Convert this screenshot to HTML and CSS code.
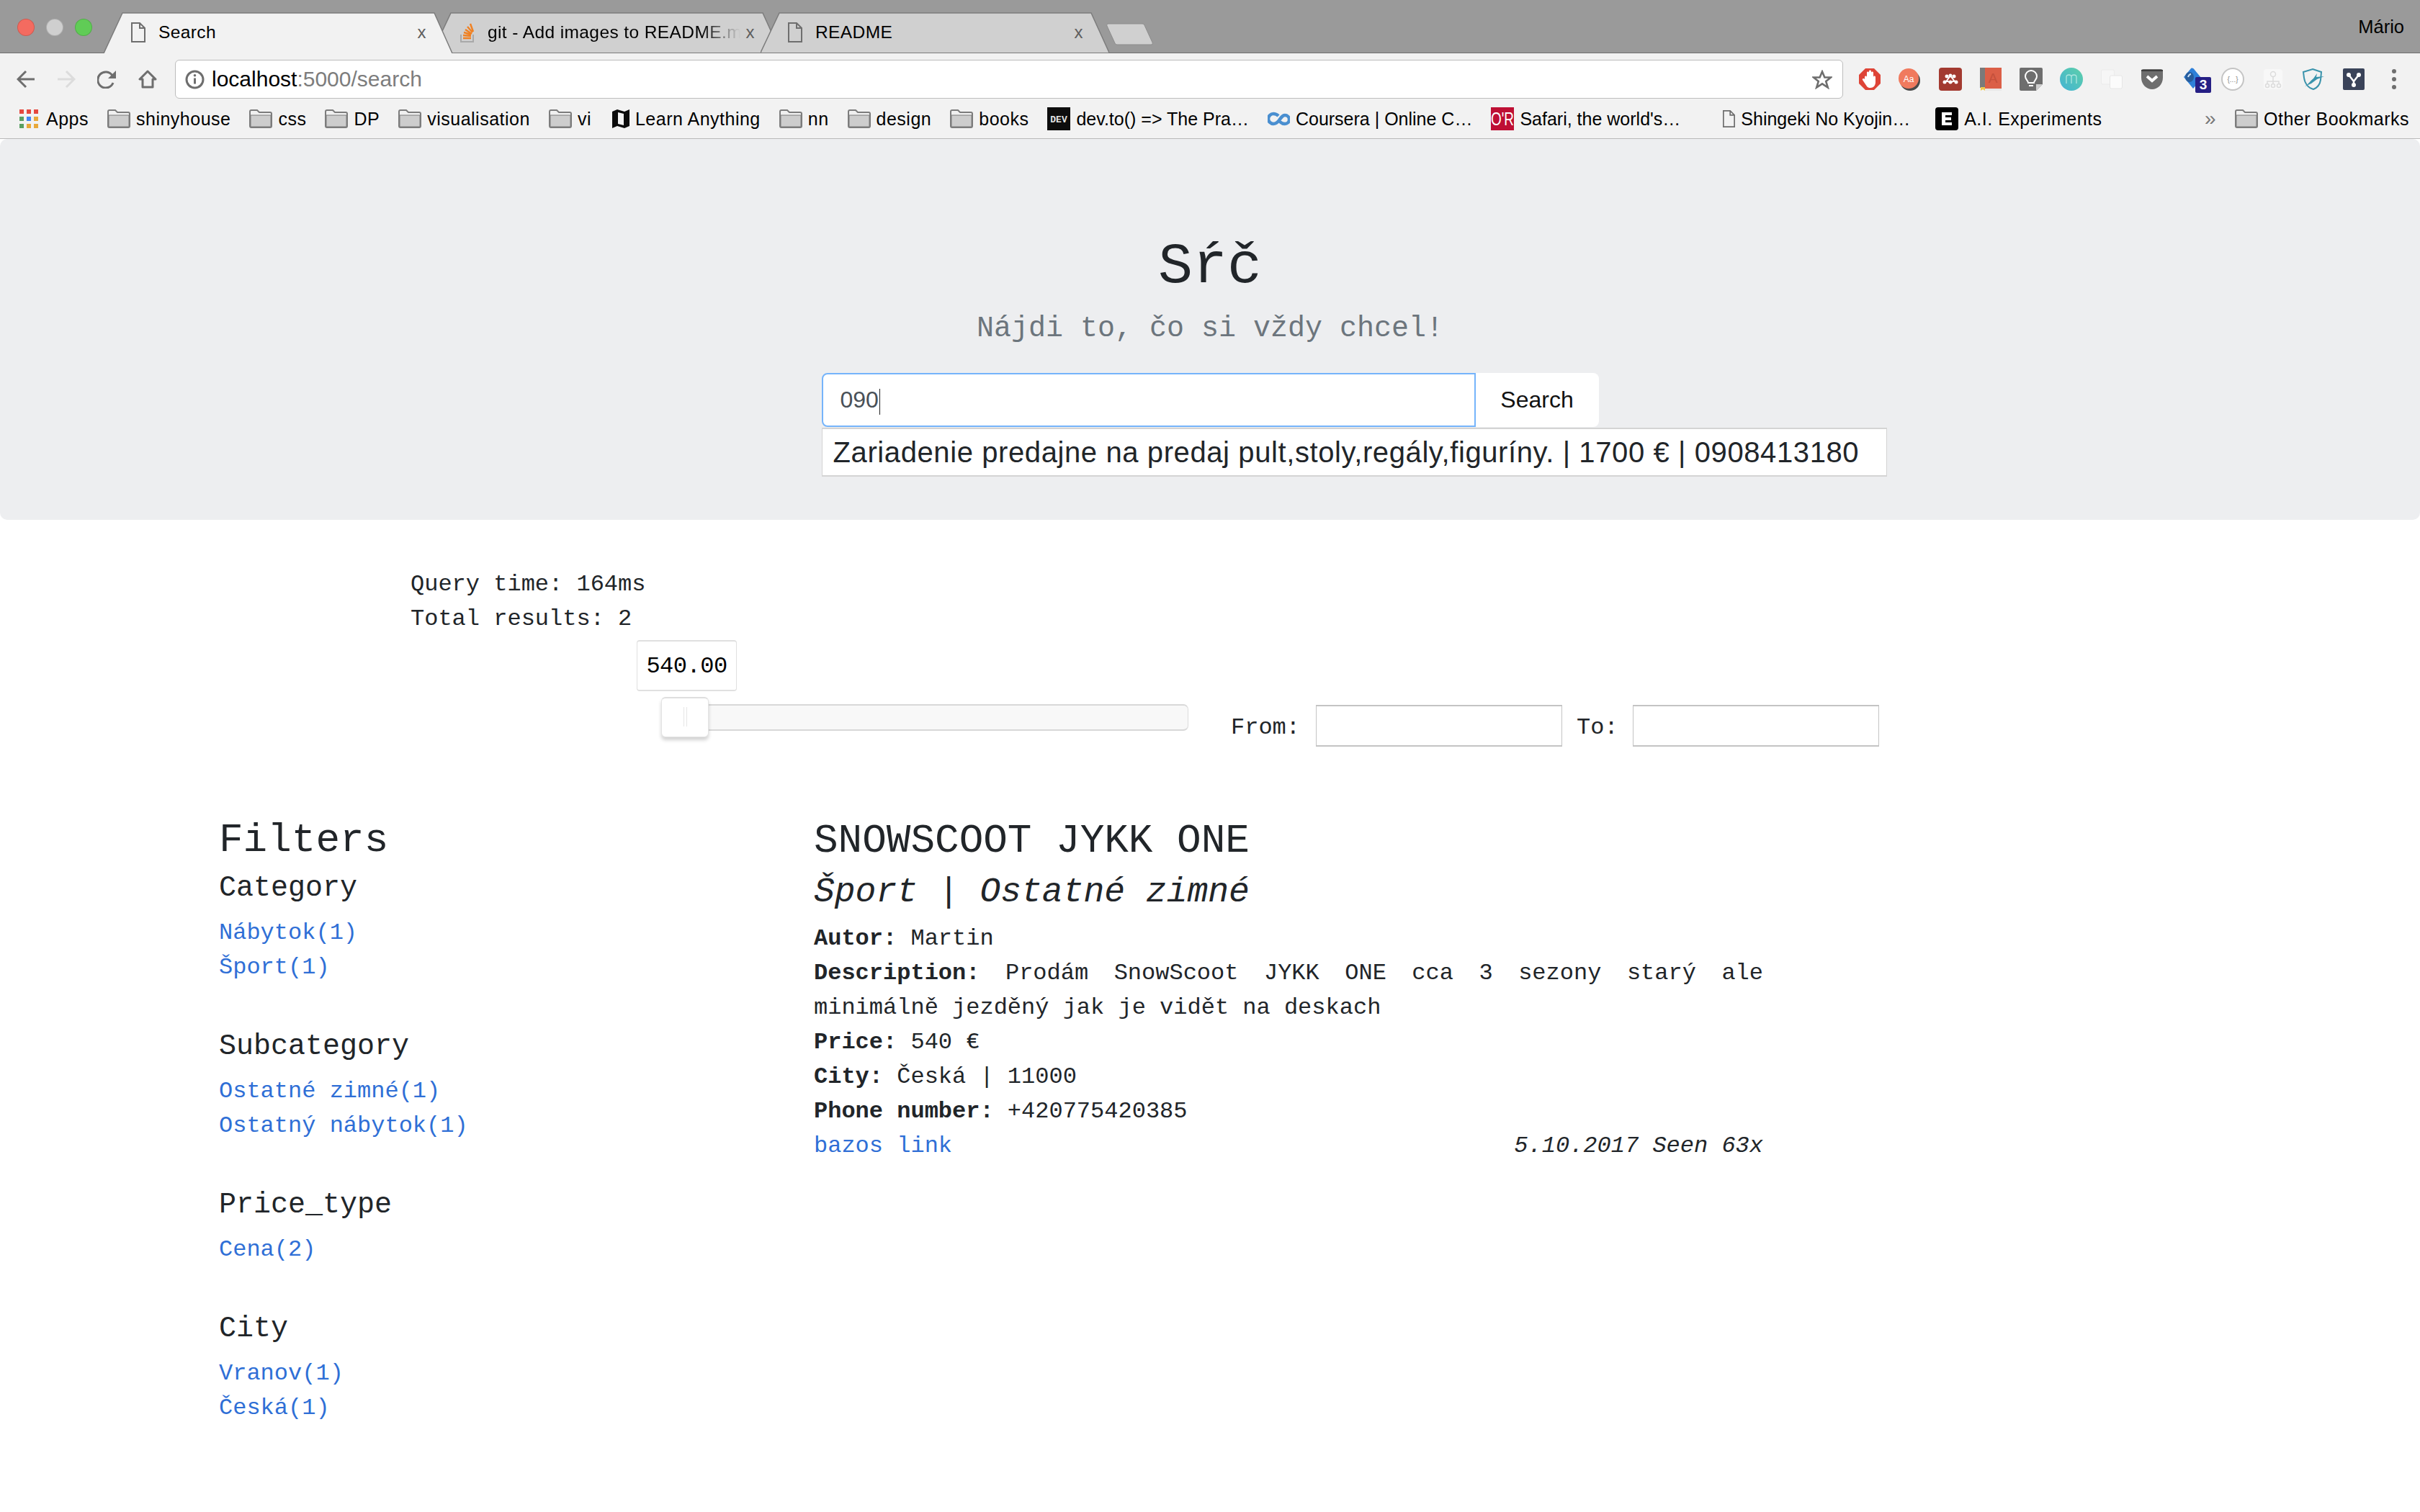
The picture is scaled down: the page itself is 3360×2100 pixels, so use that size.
FILE: index.html
```html
<!DOCTYPE html>
<html>
<head>
    <title>Search</title>
    <link rel="stylesheet" href="styles.css">
</head>
<body>
    <svg class="sprites" width="0" height="0">
        <symbol id="folder" viewBox="0 0 32 26">
            <path d="M1 3a2 2 0 0 1 2-2h8l3 3h15a2 2 0 0 1 2 2v17a2 2 0 0 1-2 2H3a2 2 0 0 1-2-2z" fill="#f0f0f0" stroke="#7c7c7c" stroke-width="2"/>
            <path d="M2 8h28v15a1 1 0 0 1-1 1H3a1 1 0 0 1-1-1z" fill="#cdcdcd" stroke="#7c7c7c" stroke-width="1"/>
        </symbol>
        <symbol id="page" viewBox="0 0 20 28">
            <path d="M1 1h11l7 7v19H1zM12 1v7h7" fill="none" stroke="#6e6e6e" stroke-width="2"/>
        </symbol>
    </svg>

    <div class="titlebar">
        <div class="lights">
            <span class="light light-red"></span>
            <span class="light light-grey"></span>
            <span class="light light-green"></span>
        </div>
        <div class="tabs">
            <div class="tab tab-active">
                <svg class="tab-shape" viewBox="0 0 484 57" preserveAspectRatio="none"><path d="M0 57L26 1H459L484 57"/></svg>
                <svg class="tab-icon" width="20" height="28"><use href="#page"/></svg>
                <span class="tab-title">Search</span>
                <span class="tab-close">x</span>
            </div>
            <div class="tab">
                <svg class="tab-shape" viewBox="0 0 484 57" preserveAspectRatio="none"><path d="M0 57L26 1H459L484 57"/></svg>
                <svg class="tab-icon" width="21" height="28" viewBox="0 0 21 28">
                    <path d="M2 17v10h17V17" fill="none" stroke="#a9a9a9" stroke-width="2"/>
                    <path d="M5 22h11M5 18l11 1M6 14l10 3M8 10l9 6M11 6l7 8M15 2l4 11" fill="none" stroke="#f08122" stroke-width="2.4"/>
                </svg>
                <span class="tab-title tab-title-fade">git - Add images to README.md</span>
                <span class="tab-close">x</span>
            </div>
            <div class="tab">
                <svg class="tab-shape" viewBox="0 0 484 57" preserveAspectRatio="none"><path d="M0 57L26 1H459L484 57"/></svg>
                <svg class="tab-icon" width="20" height="28"><use href="#page"/></svg>
                <span class="tab-title">README</span>
                <span class="tab-close">x</span>
            </div>
        </div>
        <svg class="new-tab" width="66" height="32" viewBox="0 0 66 32"><path d="M3 1H50a3 3 0 0 1 3 2L64 27a2 2 0 0 1-2 3H15a3 3 0 0 1-3-2L1 4a2 2 0 0 1 2-3z" fill="#d0d0d0" stroke="#8c8c8c" stroke-width="1"/></svg>
        <span class="profile">Mário</span>
    </div>

    <div class="toolbar">
        <div class="nav-buttons">
            <svg width="26" height="26" viewBox="0 0 26 26"><path d="M25 13H3M13 2L2 13l11 11" fill="none" stroke="#6e6e6e" stroke-width="3"/></svg>
            <svg width="26" height="26" viewBox="0 0 26 26"><path d="M1 13h22M13 2l11 11-11 11" fill="none" stroke="#dcdcdc" stroke-width="3"/></svg>
            <svg width="27" height="26" viewBox="0 0 27 26"><path d="M22 18a11 11 0 1 1-1-10" fill="none" stroke="#6e6e6e" stroke-width="3"/><path d="M26 1v11H15z" fill="#6e6e6e"/></svg>
            <svg width="26" height="26" viewBox="0 0 26 26"><path d="M13 2L2 13h4v11h14V13h4z" fill="none" stroke="#6e6e6e" stroke-width="3" stroke-linejoin="round"/></svg>
        </div>
        <div class="address">
            <svg width="27" height="27" viewBox="0 0 27 27"><circle cx="13.5" cy="13.5" r="11.5" fill="none" stroke="#6e6e6e" stroke-width="3"/><path d="M13.5 11.5v8" stroke="#6e6e6e" stroke-width="3"/><circle cx="13.5" cy="7.8" r="1.8" fill="#6e6e6e"/></svg>
            <span class="url">localhost<span class="url-rest">:5000/search</span></span>
            <svg class="star" width="28" height="27" viewBox="0 0 28 27"><path d="M14 2.5l3.4 8h8.6l-6.8 5.4 2.6 8.6L14 19.400l-7.800 5.100 2.600-8.600L2 10.500h8.600z" fill="none" stroke="#6e6e6e" stroke-width="2.600"/></svg>
        </div>
        <div class="extensions">
            <svg width="32" height="32" viewBox="0 0 32 32"><path d="M10 1h12l9 9v12l-9 9H10l-9-9V10z" fill="#de4437"/><path d="M9 13c0-2 3-2 3 0V7c0-2 3-2 3 0V5c0-2 3-2 3 0v2c0-2 3-2 3 0v6c0-2 3-2 3 0v7c0 5-3 8-7 8s-5-2-7-5l-4-6c-1-2 2-3 3-1z" fill="#fff"/></svg>
            <svg width="32" height="32" viewBox="0 0 32 32"><circle cx="16" cy="18" r="14" fill="#4a4a4a"/><circle cx="14" cy="15" r="14" fill="#f07a5e"/><text x="14" y="20" class="ext-text" font-size="12" fill="#fff" text-anchor="middle">Aa</text></svg>
            <svg width="32" height="32" viewBox="0 0 32 32"><rect width="32" height="32" rx="4" fill="#a33a30"/><path d="M16 11l-5 7M16 11l5 7M7 21l4-3 5 3 5-3 4 3" fill="none" stroke="#fff" stroke-width="2"/><circle cx="16" cy="11" r="2.500" fill="#fff"/><circle cx="11" cy="12" r="2.500" fill="#fff"/><circle cx="21" cy="12" r="2.500" fill="#fff"/><circle cx="8" cy="20" r="2.500" fill="#fff"/><circle cx="16" cy="20" r="2.500" fill="#fff"/><circle cx="24" cy="20" r="2.500" fill="#fff"/></svg>
            <svg width="30" height="32" viewBox="0 0 30 32"><rect x="6" width="24" height="28" fill="#db5f47"/><rect width="7" height="28" fill="#7a7a7a"/><path d="M7 28h23v4H7z" fill="#e9e9e9"/><path d="M7 28h23v1H7z" fill="#db5f47"/><path d="M1 27h6v5l-3-2-3 2z" fill="#f0c94d"/><text x="18" y="21" class="ext-text" font-size="19" fill="#c4503b" text-anchor="middle">A</text></svg>
            <svg width="32" height="32" viewBox="0 0 32 32"><path d="M2 0h28a2 2 0 0 1 2 2v21l-9 9H2a2 2 0 0 1-2-2V2a2 2 0 0 1 2-2z" fill="#6e6e6e"/><path d="M32 23h-9v9z" fill="#cfcfcf"/><path d="M12 21c0-3-4-4-4-9a8 8 0 0 1 16 0c0 5-4 6-4 9zM13 25h6" fill="none" stroke="#fff" stroke-width="2"/></svg>
            <svg width="32" height="32" viewBox="0 0 32 32"><defs><linearGradient id="mint" x1="1" y1="0" x2="0" y2="1"><stop offset="0" stop-color="#5dcfa9"/><stop offset="1" stop-color="#43b3d4"/></linearGradient></defs><circle cx="16" cy="16" r="16" fill="url(#mint)"/><path d="M9 22V13c0-4 7-4 7 0v9-9c0-4 7-4 7 0v9" fill="none" stroke="#aee6df" stroke-width="1.300"/></svg>
            <svg width="31" height="28" viewBox="0 0 31 28"><rect x="1" y="1" width="18" height="20" rx="2" fill="#f6f6f6" stroke="#ebebeb"/><rect x="13" y="9" width="17" height="18" rx="2" fill="#fbfbfb" stroke="#e6e6e6"/></svg>
            <svg width="32" height="30" viewBox="0 0 32 30"><path d="M1 4a3 3 0 0 1 3-3h24a3 3 0 0 1 3 3v9c0 9-7 16-15 16S1 22 1 13z" fill="#6e6e6e"/><path d="M1 3h30" stroke="#3f3f3f" stroke-width="2"/><path d="M9 11l7 6 7-6" fill="none" stroke="#fff" stroke-width="4"/></svg>
            <span class="ext-badged">
                <svg width="30" height="32" viewBox="0 0 30 32"><path d="M4 13L14 1c2-1 4 0 5 2l10 12-12 14z" fill="#2e80d8"/><ellipse cx="12" cy="13" rx="6" ry="7" fill="#285d9c"/><path d="M10 13c1-3 2-4 4-4" stroke="#cfe3f7" stroke-width="2" fill="none"/></svg>
                <span class="badge">3</span>
            </span>
            <svg width="32" height="32" viewBox="0 0 32 32"><circle cx="16" cy="16" r="15" fill="#fff" stroke="#c4c4c4" stroke-width="2"/><text x="16" y="20" class="ext-text" font-size="10" fill="#8a8a8a" text-anchor="middle">{...}</text></svg>
            <svg width="32" height="32" viewBox="0 0 32 32"><rect x="3" y="2" width="26" height="28" rx="4" fill="#f8f8f8"/><path d="M16 12v5M8 23v-4h16v4M16 17v6" fill="none" stroke="#dcdcdc" stroke-width="1.500"/><circle cx="16" cy="9" r="3.500" fill="none" stroke="#dcdcdc" stroke-width="1.500"/><circle cx="8" cy="25" r="2.500" fill="none" stroke="#dcdcdc" stroke-width="1.500"/><circle cx="16" cy="25" r="2.500" fill="none" stroke="#dcdcdc" stroke-width="1.500"/><circle cx="24" cy="25" r="2.500" fill="none" stroke="#dcdcdc" stroke-width="1.500"/></svg>
            <svg width="32" height="32" viewBox="0 0 32 32"><path d="M15 2l12 4-1 11c-1 7-5 11-10 13C9 28 4 22 3 14L2 6z" fill="none" stroke="#3a93ac" stroke-width="2"/><path d="M4 26c5-3 8-8 12-11l5-7-1 5 11-1-10 4-8 6" fill="#3a93ac"/></svg>
            <svg width="30" height="30" viewBox="0 0 30 30"><rect width="30" height="30" rx="2" fill="#3a4359"/><path d="M8 9l7 9 7-9M15 18v5" fill="none" stroke="#fff" stroke-width="2.500"/><circle cx="8" cy="9" r="3" fill="#fff"/><circle cx="22" cy="9" r="3" fill="#fff"/><circle cx="15" cy="23" r="3" fill="#fff"/></svg>
            <svg width="32" height="30" viewBox="0 0 32 30"><circle cx="16" cy="4" r="3" fill="#6e6e6e"/><circle cx="16" cy="15" r="3" fill="#6e6e6e"/><circle cx="16" cy="26" r="3" fill="#6e6e6e"/></svg>
        </div>
    </div>

    <div class="bookmarks">
        <a class="bookmark bookmark-apps">
            <svg width="26" height="26" viewBox="0 0 26 26">
                <rect width="6" height="6" fill="#e5483f"/><rect x="10" width="6" height="6" fill="#e5483f"/><rect x="20" width="6" height="6" fill="#e5483f"/>
                <rect y="10" width="6" height="6" fill="#5a9f62"/><rect x="10" y="10" width="6" height="6" fill="#4285f4"/><rect x="20" y="10" width="6" height="6" fill="#e8a93a"/>
                <rect y="20" width="6" height="6" fill="#5a9f62"/><rect x="10" y="20" width="6" height="6" fill="#e8a93a"/><rect x="20" y="20" width="6" height="6" fill="#e8a93a"/>
            </svg>Apps</a>
        <a class="bookmark"><svg width="32" height="26"><use href="#folder"/></svg>shinyhouse</a>
        <a class="bookmark"><svg width="32" height="26"><use href="#folder"/></svg>css</a>
        <a class="bookmark"><svg width="32" height="26"><use href="#folder"/></svg>DP</a>
        <a class="bookmark"><svg width="32" height="26"><use href="#folder"/></svg>visualisation</a>
        <a class="bookmark"><svg width="32" height="26"><use href="#folder"/></svg>vi</a>
        <a class="bookmark bookmark-learn"><svg width="24" height="26" viewBox="0 0 24 26"><path d="M0 3l7-3 10 3 7-3v23l-7 3-10-3-7 3z" fill="#0b0b0b"/><path d="M8 4l8 2v16l-8-2z" fill="#f2f2f2"/></svg>Learn Anything</a>
        <a class="bookmark"><svg width="32" height="26"><use href="#folder"/></svg>nn</a>
        <a class="bookmark"><svg width="32" height="26"><use href="#folder"/></svg>design</a>
        <a class="bookmark"><svg width="32" height="26"><use href="#folder"/></svg>books</a>
        <a class="bookmark bookmark-clipped"><svg width="32" height="32" viewBox="0 0 32 32"><rect width="32" height="32" fill="#0d0d0d"/><text x="16" y="21" class="dev-text" font-size="13" fill="#e4e4e4" text-anchor="middle">DEV</text></svg>dev.to() =&gt; The Pra…</a>
        <a class="bookmark bookmark-clipped"><svg width="31" height="20" viewBox="0 0 31 20"><path d="M15 6C13 4 11 3 8 3a7 7 0 0 0 0 14c3 0 5-1 8-5 3-4 5-7 8-7a6 6 0 0 1 0 12c-3 0-5-1-7-3" fill="none" stroke="#4a8fd0" stroke-width="4.500"/></svg>Coursera | Online C…</a>
        <a class="bookmark bookmark-clipped"><svg width="32" height="32" viewBox="0 0 32 32"><rect width="32" height="32" fill="#be0f34"/><text x="0" y="25" class="ext-text" font-size="25" fill="#fff" textLength="32" lengthAdjust="spacingAndGlyphs">O'R</text></svg>Safari, the world's…</a>
        <a class="bookmark bookmark-clipped bookmark-shingeki"><svg width="17" height="26" viewBox="0 0 20 28"><use href="#page"/></svg>Shingeki No Kyojin…</a>
        <a class="bookmark bookmark-ai"><svg width="32" height="32" viewBox="0 0 32 32"><rect width="32" height="32" rx="4" fill="#000"/><path d="M9 7h14v4H14v3h8v4h-8v3h9v4H9z" fill="#fff"/></svg>A.I. Experiments</a>
        <span class="bookmarks-more">»</span>
        <a class="bookmark"><svg width="32" height="26"><use href="#folder"/></svg>Other Bookmarks</a>
    </div>

    <header class="hero">
        <h1 class="hero-title">Sŕč</h1>
        <p class="hero-lead">Nájdi to, čo si vždy chcel!</p>
        <form class="search-form">
            <div class="search-input">090<span class="caret"></span></div>
            <button class="search-button" type="button">Search</button>
            <div class="suggestions">Zariadenie predajne na predaj pult,stoly,regály,figuríny. | 1700 € | 0908413180</div>
        </form>
    </header>

    <main>
        <div class="stats">
            <div>Query time: 164ms</div>
            <div>Total results: 2</div>
        </div>

        <div class="price-filter">
            <div class="slider">
                <div class="slider-value">540.00</div>
                <div class="slider-handle"></div>
            </div>
            <label class="price-label">From:</label>
            <input class="price-input" type="text">
            <label class="price-label">To:</label>
            <input class="price-input" type="text">
        </div>

        <div class="columns">
            <aside>
                <h2 class="filters-title">Filters</h2>
                <section class="filter-group">
                    <h5 class="filter-name">Category</h5>
                    <a class="link">Nábytok(1)</a>
                    <a class="link">Šport(1)</a>
                </section>
                <section class="filter-group">
                    <h5 class="filter-name">Subcategory</h5>
                    <a class="link">Ostatné zimné(1)</a>
                    <a class="link">Ostatný nábytok(1)</a>
                </section>
                <section class="filter-group">
                    <h5 class="filter-name">Price_type</h5>
                    <a class="link">Cena(2)</a>
                </section>
                <section class="filter-group">
                    <h5 class="filter-name">City</h5>
                    <a class="link">Vranov(1)</a>
                    <a class="link">Česká(1)</a>
                </section>
            </aside>

            <article class="result">
                <h2 class="result-title">SNOWSCOOT JYKK ONE</h2>
                <h4 class="result-category">Šport | Ostatné zimné</h4>
                <div><b>Autor:</b> Martin</div>
                <div class="result-description"><b>Description:</b> Prodám SnowScoot JYKK ONE cca 3 sezony starý ale minimálně jezděný jak je vidět na deskach</div>
                <div><b>Price:</b> 540 €</div>
                <div><b>City:</b> Česká | 11000</div>
                <div><b>Phone number:</b> +420775420385</div>
                <div class="result-footer">
                    <a class="link">bazos link</a>
                    <i>5.10.2017 Seen 63x</i>
                </div>
            </article>
        </div>
    </main>
</body>
</html>
```

FILE: styles.css
```css
body {
    margin: 0;
    background-color: #fff;
    color: #212529;
    font-family: 'Liberation Mono', monospace;
    font-size: 32px;
    line-height: 48px;
}

.sprites {
    position: absolute;
}

h1, h2, h4, h5, p {
    margin: 0;
    font-weight: 400;
}

/* browser window */

.titlebar {
    display: flex;
    align-items: flex-end;
    height: 73px;
    background-color: #9a9a9a;
    border-bottom: 1px solid #6f6f6f;
    font-family: 'Liberation Sans', sans-serif;
    font-size: 24.5px;
    letter-spacing: .4px;
    color: #000;
}

.lights {
    display: flex;
    gap: 16px;
    align-self: flex-start;
    margin: 26px 16px 0 24px;
}

.light {
    width: 22px;
    height: 22px;
    border-radius: 50%;
    border: 1px solid rgba(0, 0, 0, .15);
}

.light-red {
    background-color: #f46b60;
}

.light-grey {
    background-color: #cfcfcf;
}

.light-green {
    background-color: #60cc56;
}

.tabs {
    display: flex;
}

.tab {
    position: relative;
    display: flex;
    align-items: center;
    box-sizing: border-box;
    width: 484px;
    height: 57px;
    margin-bottom: -1px;
    margin-right: -28px;
    padding: 0 36px 1px 38px;
    border-bottom: 1px solid #7c7c7c;
}

.tab-active {
    z-index: 2;
    border-bottom: none;
}

.tab-shape {
    position: absolute;
    top: 0;
    left: 0;
    width: 100%;
    height: 100%;
    fill: #d0d0d0;
    stroke: #7c7c7c;
    stroke-width: 1.5;
}

.tab-active .tab-shape {
    fill: #f2f2f2;
}

.tab-icon {
    position: relative;
    flex: none;
    margin-right: 18px;
}

.tab-title {
    position: relative;
    flex: 1;
    overflow: hidden;
    white-space: nowrap;
}

.tab-title-fade {
    -webkit-mask-image: linear-gradient(to right, #000 84%, transparent);
    mask-image: linear-gradient(to right, #000 84%, transparent);
}

.tab-close {
    position: relative;
    margin-left: 8px;
    color: #5f5f5f;
    font-size: 24px;
}

.new-tab {
    margin: 0 0 9px 24px;
}

.profile {
    margin-left: auto;
    align-self: center;
    margin-right: 22px;
    font-size: 25.5px;
    letter-spacing: 0;
}

.toolbar {
    display: flex;
    align-items: center;
    height: 54px;
    padding-top: 9px;
    background-color: #f2f2f2;
}

.nav-buttons {
    display: flex;
    gap: 30px;
    margin-left: 23px;
    margin-right: 25px;
}

.address {
    flex: 1;
    display: flex;
    align-items: center;
    height: 54px;
    box-sizing: border-box;
    padding: 0 14px 0 13px;
    background-color: #fff;
    border: 1px solid #bdbdbd;
    border-radius: 6px;
}

.url {
    margin-left: 10px;
    font-family: 'Liberation Sans', sans-serif;
    font-size: 30px;
    color: #000;
}

.url-rest {
    color: #7d7d7d;
}

.star {
    margin-left: auto;
}

.extensions {
    display: flex;
    align-items: center;
    gap: 24px;
    margin: 0 20px 0 21px;
}

.extensions > * {
    flex: none;
    width: 32px;
}

.ext-badged {
    position: relative;
    display: flex;
}

.badge {
    position: absolute;
    right: -10px;
    top: 13px;
    width: 22px;
    height: 22px;
    background-color: #261f85;
    border-radius: 2px;
    color: #fff;
    font-family: 'Liberation Sans', sans-serif;
    font-size: 19px;
    font-weight: 700;
    line-height: 22px;
    text-align: center;
}

.ext-text {
    font-family: 'Liberation Sans', sans-serif;
}

.dev-text {
    font-family: 'Liberation Mono', monospace;
    font-weight: 700;
}

.bookmarks {
    display: flex;
    align-items: center;
    gap: 26px;
    height: 56px;
    box-sizing: border-box;
    padding: 0 15px 0 27px;
    background-color: #f2f2f2;
    border-bottom: 1px solid #b9b9b9;
    font-family: 'Liberation Sans', sans-serif;
    font-size: 25px;
    letter-spacing: .5px;
    color: #000;
    white-space: nowrap;
}

.bookmark {
    display: flex;
    align-items: center;
    gap: 8px;
}

.bookmark-apps {
    gap: 11px;
}

.bookmark-learn {
    margin-left: 3px;
}

.bookmark-clipped {
    letter-spacing: 0;
}

.bookmark-shingeki {
    margin-left: 33px;
}

.bookmark-ai {
    margin-left: 9px;
}

.bookmarks-more {
    margin-left: auto;
    color: #777;
    font-size: 28px;
}

/* search header */

.hero {
    box-sizing: border-box;
    height: 529px;
    padding-top: 130px;
    background-color: #edeef0;
    border-radius: 10px;
    text-align: center;
}

.hero-title {
    font-size: 80px;
    line-height: 96px;
}

.hero-lead {
    margin-top: 8px;
    color: #6c757d;
    font-size: 40px;
    line-height: 60px;
}

.search-form {
    position: relative;
    display: flex;
    width: 1079px;
    height: 75px;
    margin: 31px auto 0;
    text-align: left;
}

.search-input {
    flex: 1;
    box-sizing: border-box;
    height: 75px;
    padding: 0 24px;
    background-color: #fff;
    border: 2px solid #75b4fb;
    border-radius: 8px 0 0 8px;
    color: #495057;
    font-family: 'Liberation Sans', sans-serif;
    font-size: 32px;
    line-height: 71px;
}

.caret {
    display: inline-block;
    height: 36px;
    margin-left: 1px;
    border-left: 1px solid #222;
    vertical-align: middle;
}

.search-button {
    width: 171px;
    background-color: #fff;
    border: none;
    border-radius: 0 8px 8px 0;
    color: #111;
    font-family: 'Liberation Sans', sans-serif;
    font-size: 32px;
}

.suggestions {
    position: absolute;
    top: 76px;
    left: 0;
    box-sizing: border-box;
    width: 1479px;
    height: 68px;
    padding-left: 15px;
    background-color: #fff;
    border: 1px solid #d4d4d4;
    border-width: 2px 1px;
    color: #212529;
    font-family: 'Liberation Sans', sans-serif;
    font-size: 40px;
    letter-spacing: .6px;
    line-height: 64px;
    white-space: nowrap;
}

/* results page */

.stats {
    padding: 66px 0 0 570px;
}

.price-filter {
    display: flex;
    align-items: flex-start;
    margin: 84px 0 0 918px;
}

.slider {
    position: relative;
    box-sizing: border-box;
    width: 732px;
    height: 37px;
    margin-top: 10px;
    background-color: #f8f8f8;
    border: 1px solid #dcdcdc;
    border-top: 2px solid #d8d8d8;
    border-bottom: 2px solid #d8d8d8;
    border-radius: 7px;
}

.slider-value {
    position: absolute;
    left: -35px;
    top: -91px;
    width: 139px;
    height: 71px;
    box-sizing: border-box;
    background-color: #fff;
    border: 1px solid #e0e0e0;
    border-width: 2px 1px;
    border-radius: 4px;
    color: #000;
    line-height: 69px;
    text-align: center;
    letter-spacing: -.5px;
}

.slider-handle {
    position: absolute;
    left: -1px;
    top: -12px;
    width: 66px;
    height: 56px;
    box-sizing: border-box;
    background-color: #fff;
    border: 1px solid #e4e4e4;
    border-top: 2px solid #dedede;
    border-radius: 6px;
    box-shadow: 0 4px 5px rgba(0, 0, 0, .18);
}

.slider-handle::after {
    content: "";
    display: block;
    width: 3px;
    height: 27px;
    margin: 12px auto 0;
    border: 1px solid #e6e6e6;
    border-width: 0 1px;
}

.price-label {
    margin: 13px 20px 0 0;
    line-height: 60px;
}

.price-label:nth-of-type(1) {
    margin-left: 59px;
    margin-right: 22px;
}

.price-input {
    box-sizing: border-box;
    width: 342px;
    height: 58px;
    margin: 11px 20px 0 0;
    background-color: #fff;
    border: 1px solid #c4c4c4;
    border-width: 2px 1px;
}

.columns {
    display: grid;
    grid-template-columns: 826px 1318px;
    margin-top: 93px;
    padding-left: 304px;
    padding-bottom: 40px;
}

.filters-title {
    font-size: 56px;
    line-height: 67px;
    margin-bottom: 9px;
}

.filter-group {
    margin-bottom: 62px;
}

.filter-name {
    margin-bottom: 14px;
    font-size: 40px;
    line-height: 48px;
}

.link {
    display: block;
    color: #2f6fd6;
}

.result-title {
    margin-top: -2px;
    font-size: 56px;
    line-height: 72px;
    margin-bottom: 6px;
}

.result-category {
    margin-bottom: 12px;
    font-size: 48px;
    font-style: italic;
    line-height: 58px;
}

.result-description {
    text-align: justify;
}

.result-footer {
    display: flex;
    justify-content: space-between;
}
```
